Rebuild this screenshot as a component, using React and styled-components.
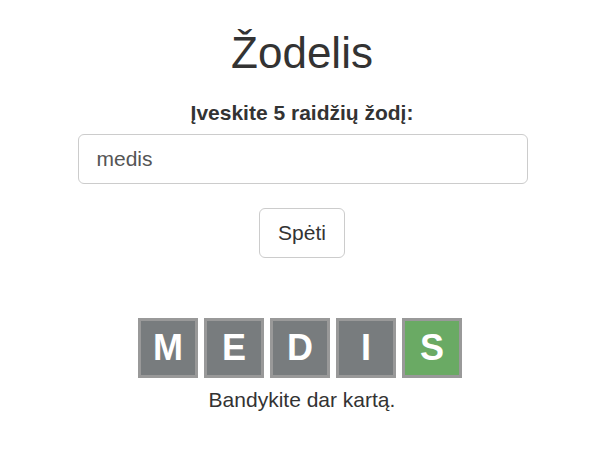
import React, { useState } from "react"
import styled, { createGlobalStyle } from "styled-components"

const GlobalStyle = createGlobalStyle`
    body {
        margin: 0;
        background: #fff;
        font-family: "Liberation Sans", Arial, sans-serif;
        color: #333;
    }
`

const Page = styled.div`
    display: flex;
    flex-direction: column;
    align-items: center;
    padding-top: 24px;
`

const Title = styled.h1`
    margin: 0;
    font-size: 44px;
    font-weight: 400;
    line-height: 58px;
    color: #333;
`

const Label = styled.label`
    margin-top: 18px;
    font-size: 21px;
    font-weight: 700;
    line-height: 26px;
`

const Input = styled.input`
    box-sizing: border-box;
    margin: 8px 0 0 1px;
    width: 450px;
    height: 50px;
    padding: 0 18px;
    border: 1px solid #ccc;
    border-radius: 6px;
    font-family: inherit;
    font-size: 21px;
    color: #555;
    outline: none;
`

const GuessButton = styled.button`
    box-sizing: border-box;
    margin-top: 24px;
    height: 50px;
    padding: 0 18px;
    border: 1px solid #ccc;
    border-radius: 6px;
    background: #fff;
    font-family: inherit;
    font-size: 21px;
    color: #333;
`

const Board = styled.div`
    display: flex;
    gap: 6px;
    margin: 60px 4px 0 0;
`

const Tile = styled.div`
    box-sizing: border-box;
    width: 60px;
    height: 60px;
    display: flex;
    align-items: center;
    justify-content: center;
    border: 3px solid #999;
    background: ${(p) => (p.$state === "correct" ? "#6aaa64" : "#787c7e")};
    color: #fff;
    font-size: 36px;
    font-weight: 700;
`

const Result = styled.p`
    margin: 8px 0 0;
    font-size: 21px;
    line-height: 28px;
`

const guess = [
    { letter: "M", state: "absent" },
    { letter: "E", state: "absent" },
    { letter: "D", state: "absent" },
    { letter: "I", state: "absent" },
    { letter: "S", state: "correct" },
]

const App = () => {
    const [word, setWord] = useState("medis")

    return (
        <>
            <GlobalStyle />
            <Page>
                <Title>Žodelis</Title>
                <Label htmlFor="word">Įveskite 5 raidžių žodį:</Label>
                <Input id="word" value={word} onChange={(e) => setWord(e.target.value)} />
                <GuessButton>Spėti</GuessButton>
                <Board>
                    {guess.map((g, i) => (
                        <Tile key={i} $state={g.state}>{g.letter}</Tile>
                    ))}
                </Board>
                <Result>Bandykite dar kartą.</Result>
            </Page>
        </>
    )
}

export default App
